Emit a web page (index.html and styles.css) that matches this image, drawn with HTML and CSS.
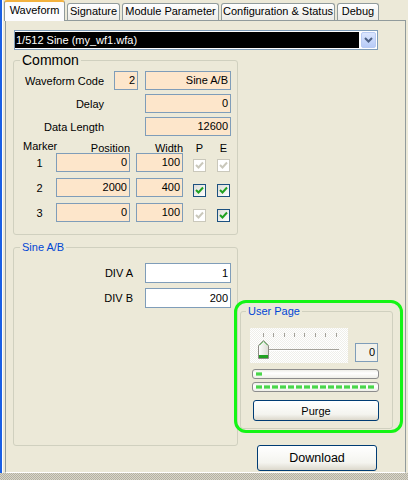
FILE: index.html
```html
<!DOCTYPE html>
<html lang="en">
<head>
    <meta charset="UTF-8">
    <title>Waveform</title>
    <link rel="stylesheet" href="styles.css">
</head>
<body>
    <div class="window">
        <div class="tabs">
            <div class="tab active tab-waveform">Waveform</div>
            <div class="tab tab-signature">Signature</div>
            <div class="tab tab-module">Module Parameter</div>
            <div class="tab tab-config">Configuration &amp; Status</div>
            <div class="tab tab-debug">Debug</div>
        </div>

        <div class="panel">
            <div class="combo">
                <span class="combo-text">1/512 Sine (my_wf1.wfa)</span>
                <span class="combo-btn">
                    <svg width="9" height="6" viewBox="0 0 9 6"><polyline points="1,1 4.5,4.5 8,1" fill="none" stroke="#4d6185" stroke-width="2"/></svg>
                </span>
            </div>

            <div class="columns">
                <div class="col-left">
                    <fieldset class="group group-common">
                        <legend>Common</legend>
                        <div class="field-row">
                            <span class="label">Waveform Code</span>
                            <div class="box peach">2</div>
                            <div class="box peach">Sine A/B</div>
                        </div>
                        <div class="field-row">
                            <span class="label">Delay</span>
                            <div class="box peach wide">0</div>
                        </div>
                        <div class="field-row">
                            <span class="label">Data Length</span>
                            <div class="box peach wide">12600</div>
                        </div>

                        <div class="marker-row marker-head">
                            <span class="mk-marker">Marker</span>
                            <span class="mk-pos">Position</span>
                            <span class="mk-width">Width</span>
                            <span class="mk-flag">P</span>
                            <span class="mk-flag">E</span>
                        </div>
                        <div class="marker-row">
                            <span class="mk-num">1</span>
                            <div class="box peach pos">0</div>
                            <div class="box peach width">100</div>
                            <span class="cb disabled"><svg width="9" height="9" viewBox="0 0 9 9"><polyline points="1,4 3.5,6.5 8,1.5" fill="none" stroke="#cac8bb" stroke-width="2"/></svg></span>
                            <span class="cb disabled"><svg width="9" height="9" viewBox="0 0 9 9"><polyline points="1,4 3.5,6.5 8,1.5" fill="none" stroke="#cac8bb" stroke-width="2"/></svg></span>
                        </div>
                        <div class="marker-row">
                            <span class="mk-num">2</span>
                            <div class="box peach pos">2000</div>
                            <div class="box peach width">400</div>
                            <span class="cb"><svg width="9" height="9" viewBox="0 0 9 9"><polyline points="1,4 3.5,6.5 8,1.5" fill="none" stroke="#21a121" stroke-width="2"/></svg></span>
                            <span class="cb"><svg width="9" height="9" viewBox="0 0 9 9"><polyline points="1,4 3.5,6.5 8,1.5" fill="none" stroke="#21a121" stroke-width="2"/></svg></span>
                        </div>
                        <div class="marker-row">
                            <span class="mk-num">3</span>
                            <div class="box peach pos">0</div>
                            <div class="box peach width">100</div>
                            <span class="cb disabled"><svg width="9" height="9" viewBox="0 0 9 9"><polyline points="1,4 3.5,6.5 8,1.5" fill="none" stroke="#cac8bb" stroke-width="2"/></svg></span>
                            <span class="cb"><svg width="9" height="9" viewBox="0 0 9 9"><polyline points="1,4 3.5,6.5 8,1.5" fill="none" stroke="#21a121" stroke-width="2"/></svg></span>
                        </div>
                    </fieldset>

                    <fieldset class="group group-sine">
                        <legend>Sine A/B</legend>
                        <div class="div-row">
                            <span class="label">DIV A</span>
                            <div class="box">1</div>
                        </div>
                        <div class="div-row">
                            <span class="label">DIV B</span>
                            <div class="box">200</div>
                        </div>
                    </fieldset>
                </div>

                <div class="col-right">
                    <div class="user-wrap">
                        <fieldset class="group group-user">
                            <legend>User Page</legend>
                            <div class="user-body">
                                <div class="slider-row">
                                    <div class="slider">
                                        <svg width="98" height="35" viewBox="0 0 98 35">
                                            <g stroke="#a3a199" stroke-width="1">
                                                <line x1="13.5" y1="5" x2="13.5" y2="9"/>
                                                <line x1="23.5" y1="5" x2="23.5" y2="9"/>
                                                <line x1="34.5" y1="5" x2="34.5" y2="9"/>
                                                <line x1="44.5" y1="5" x2="44.5" y2="9"/>
                                                <line x1="54.5" y1="5" x2="54.5" y2="9"/>
                                                <line x1="65.5" y1="5" x2="65.5" y2="9"/>
                                                <line x1="75.5" y1="5" x2="75.5" y2="9"/>
                                                <line x1="86.5" y1="5" x2="86.5" y2="9"/>
                                            </g>
                                            <line x1="13" y1="21.5" x2="89" y2="21.5" stroke="#a3a199"/>
                                            <line x1="13" y1="22.5" x2="89" y2="22.5" stroke="#fff"/>
                                            <defs>
                                                <linearGradient id="thumb" x1="0" y1="0" x2="1" y2="0">
                                                    <stop offset="0" stop-color="#ffffff"/>
                                                    <stop offset="1" stop-color="#dcdbd3"/>
                                                </linearGradient>
                                            </defs>
                                            <polygon points="13.5,12.5 18.5,17.5 18.5,30.5 8.5,30.5 8.5,17.5" fill="url(#thumb)" stroke="#8d8b84"/>
                                            <polyline points="9.5,17.5 13.5,13.5 17.5,17.5" fill="none" stroke="#7fd37f"/>
                                            <rect x="9" y="27" width="9" height="3" fill="#21a121"/>
                                        </svg>
                                    </div>
                                    <div class="value-box">0</div>
                                </div>
                                <div class="progress">
                                    <span class="chunk"></span>
                                </div>
                                <div class="progress">
                                    <span class="chunk"></span><span class="chunk"></span><span class="chunk"></span>
                                    <span class="chunk"></span><span class="chunk"></span><span class="chunk"></span>
                                    <span class="chunk"></span><span class="chunk"></span><span class="chunk"></span>
                                    <span class="chunk"></span><span class="chunk"></span><span class="chunk"></span>
                                    <span class="chunk"></span><span class="chunk"></span><span class="chunk"></span>
                                </div>
                                <button class="xp-btn purge">Purge</button>
                            </div>
                        </fieldset>
                    </div>
                    <button class="xp-btn download">Download</button>
                </div>
            </div>
        </div>
    </div>
    <div class="statusbar"></div>
</body>
</html>
```

FILE: styles.css
```css
* {
    margin: 0;
    padding: 0;
    box-sizing: border-box;
}

body {
    width: 408px;
    height: 480px;
    overflow: hidden;
    background-color: #ece9d8;
    font-family: "Liberation Sans", Arial, sans-serif;
    font-size: 11px;
    color: #000;
}

/* window frame with the blue edge on the left */
.window {
    height: 473px;
    display: flex;
    flex-direction: column;
    border-left: 2px solid #1a5fe4;
    box-shadow: inset 1px 0 #fff;
}

/* tab strip */
.tabs {
    display: flex;
    align-items: flex-end;
    height: 20px;
    padding-left: 2px;
    position: relative;
    z-index: 1;
}

.tab {
    height: 17px;
    margin-left: 2px;
    border: 1px solid #919b9c;
    border-bottom: none;
    border-radius: 3px 3px 0 0;
    background: linear-gradient(#ffffff, #ecebe6);
    text-align: center;
    line-height: 14px;
    white-space: nowrap;
}

.tab.active {
    height: 21px;
    margin-left: 0;
    margin-bottom: -1px;
    border-top: 2px solid #f3b23f;
    background: #fcfcfe;
    line-height: 16px;
}

.tab-waveform { width: 61px; }
.tab-signature { width: 53px; }
.tab-module { width: 97px; }
.tab-config { width: 114px; }
.tab-debug { width: 42px; }

.panel {
    flex: 1;
    display: flex;
    flex-direction: column;
    margin: 0 2px 0 3px;
    border: 1px solid #919b9c;
    border-bottom-color: #fff;
    padding: 9px 0 0 7px;
}

/* combo box */
.combo {
    display: flex;
    width: 364px;
    height: 20px;
    margin-left: 1px;
    border: 1px solid #7f9db9;
    background: #fff;
    padding: 1px 1px 1px 0;
}

.combo-text {
    flex: 1;
    margin-right: 2px;
    background: #000;
    color: #fff;
    line-height: 16px;
    padding-left: 1px;
}

.combo-btn {
    width: 15px;
    display: flex;
    align-items: center;
    justify-content: center;
    border: 1px solid #b9cbf3;
    border-radius: 2px;
    background: linear-gradient(#dbe6fe, #b7cbf7);
}

.columns {
    flex: 1;
    display: flex;
    margin-top: 2px;
}

.col-left {
    width: 225px;
}

.col-right {
    flex: 1;
    display: flex;
    flex-direction: column;
    justify-content: flex-end;
}

/* group boxes */
.group {
    border: 1px solid #d0d0bf;
    border-radius: 3px;
    min-width: 0;
}

.group legend {
    margin-left: 6px;
    padding: 0 2px;
    color: #0046d5;
    line-height: 13px;
}

.group-common {
    height: 183px;
    padding: 3px 0 0 0;
}

.group-common legend {
    color: #000;
    font-size: 14px;
    line-height: 16px;
}

.group-sine {
    height: 205px;
    margin-top: 6px;
    padding-top: 9px;
}

/* text boxes */
.box {
    height: 19px;
    border: 1px solid #7f9db9;
    background: #fff;
    text-align: right;
    padding-right: 2px;
    line-height: 17px;
}

.box.peach {
    background: #fde6cb;
}

.field-row {
    display: grid;
    grid-template-columns: 93px 24px 86px;
    column-gap: 7px;
    align-items: center;
    margin-bottom: 4px;
}

.field-row .label {
    text-align: right;
    padding-right: 3px;
}

.field-row .wide {
    grid-column: 3;
}

/* marker table */
.marker-row {
    display: grid;
    grid-template-columns: 33px 80px 57px 24px 13px;
    padding-left: 9px;
    margin-top: 6px;
    height: 19px;
    align-items: center;
}

.marker-head {
    margin-top: 4px;
    height: 13px;
    align-items: end;
}

.mk-marker {
    white-space: nowrap;
    margin-bottom: 2px;
}

.mk-pos {
    text-align: right;
    padding-right: 6px;
}

.mk-width {
    text-align: right;
    padding-right: 10px;
}

.mk-flag {
    width: 13px;
    text-align: center;
}

.marker-head + .marker-row {
    margin-top: 0;
}

.mk-num {
    text-align: center;
}

.box.pos { width: 74px; }
.box.width { width: 47px; }

.cb {
    width: 13px;
    height: 13px;
    align-self: end;
    display: flex;
    align-items: center;
    justify-content: center;
    border: 1px solid #1c5180;
    background: linear-gradient(135deg, #dcdcd7, #ffffff);
}

.cb.disabled {
    border-color: #cac8bb;
    background: #fff;
}

.div-row {
    display: grid;
    grid-template-columns: 122px 86px;
    column-gap: 9px;
    align-items: center;
    margin-bottom: 5px;
}

.div-row .label {
    text-align: right;
    padding-right: 3px;
}

.div-row .box {
    height: 20px;
    line-height: 18px;
}

/* user page with its green highlight ring */
.user-wrap {
    position: relative;
    width: 153px;
    margin-left: 2px;
}

.user-wrap::after {
    content: "";
    position: absolute;
    top: -5px;
    left: -6px;
    right: -10px;
    bottom: -4px;
    border: 3px solid #14f514;
    border-radius: 12px;
    pointer-events: none;
}

.group-user legend {
    margin-left: 5px;
}

.user-body {
    padding: 10px 12px 7px 9px;
}

.slider-row {
    display: flex;
    align-items: flex-end;
}

.slider {
    width: 98px;
    height: 35px;
    background-color: #f6f6f3;
    background-image: conic-gradient(#ffffff 25%, #efefea 0 50%, #ffffff 0 75%, #efefea 0);
    background-size: 2px 2px;
}

.slider svg {
    display: block;
}

.value-box {
    width: 23px;
    height: 19px;
    margin: 0 0 1px 7px;
    border: 1px solid #7f9db9;
    background: #f2f1ea;
    text-align: right;
    padding-right: 2px;
    line-height: 17px;
}

.progress {
    display: flex;
    gap: 2px;
    width: 127px;
    height: 10px;
    margin: 6px 0 0 2px;
    padding: 2px 3px;
    border: 1px solid #8c8c8c;
    border-radius: 3px;
    background: linear-gradient(#eeeee8, #ffffff 40%, #eeeee8);
}

.progress + .progress {
    margin-top: 3px;
}

.chunk {
    width: 6px;
    background: linear-gradient(#a8eea8, #2ccd2c 50%, #a8eea8);
}

/* xp style push buttons */
.xp-btn {
    font-family: inherit;
    color: #000;
    border: 1px solid #003c74;
    border-radius: 3px;
    background: linear-gradient(#ffffff, #f4f4ef 70%, #dcd8cc);
    cursor: pointer;
}

.purge {
    display: block;
    width: 126px;
    height: 21px;
    margin: 8px 0 0 3px;
    font-size: 11px;
}

.download {
    width: 120px;
    height: 26px;
    margin: 16px 0 1px 19px;
    font-size: 12.5px;
}

.statusbar {
    height: 7px;
    background-color: #c9c6b8;
    background-image: conic-gradient(#b4b1a3 25%, #d8d5c8 0 50%, #b4b1a3 0 75%, #d8d5c8 0);
    background-size: 2px 2px;
}
```
